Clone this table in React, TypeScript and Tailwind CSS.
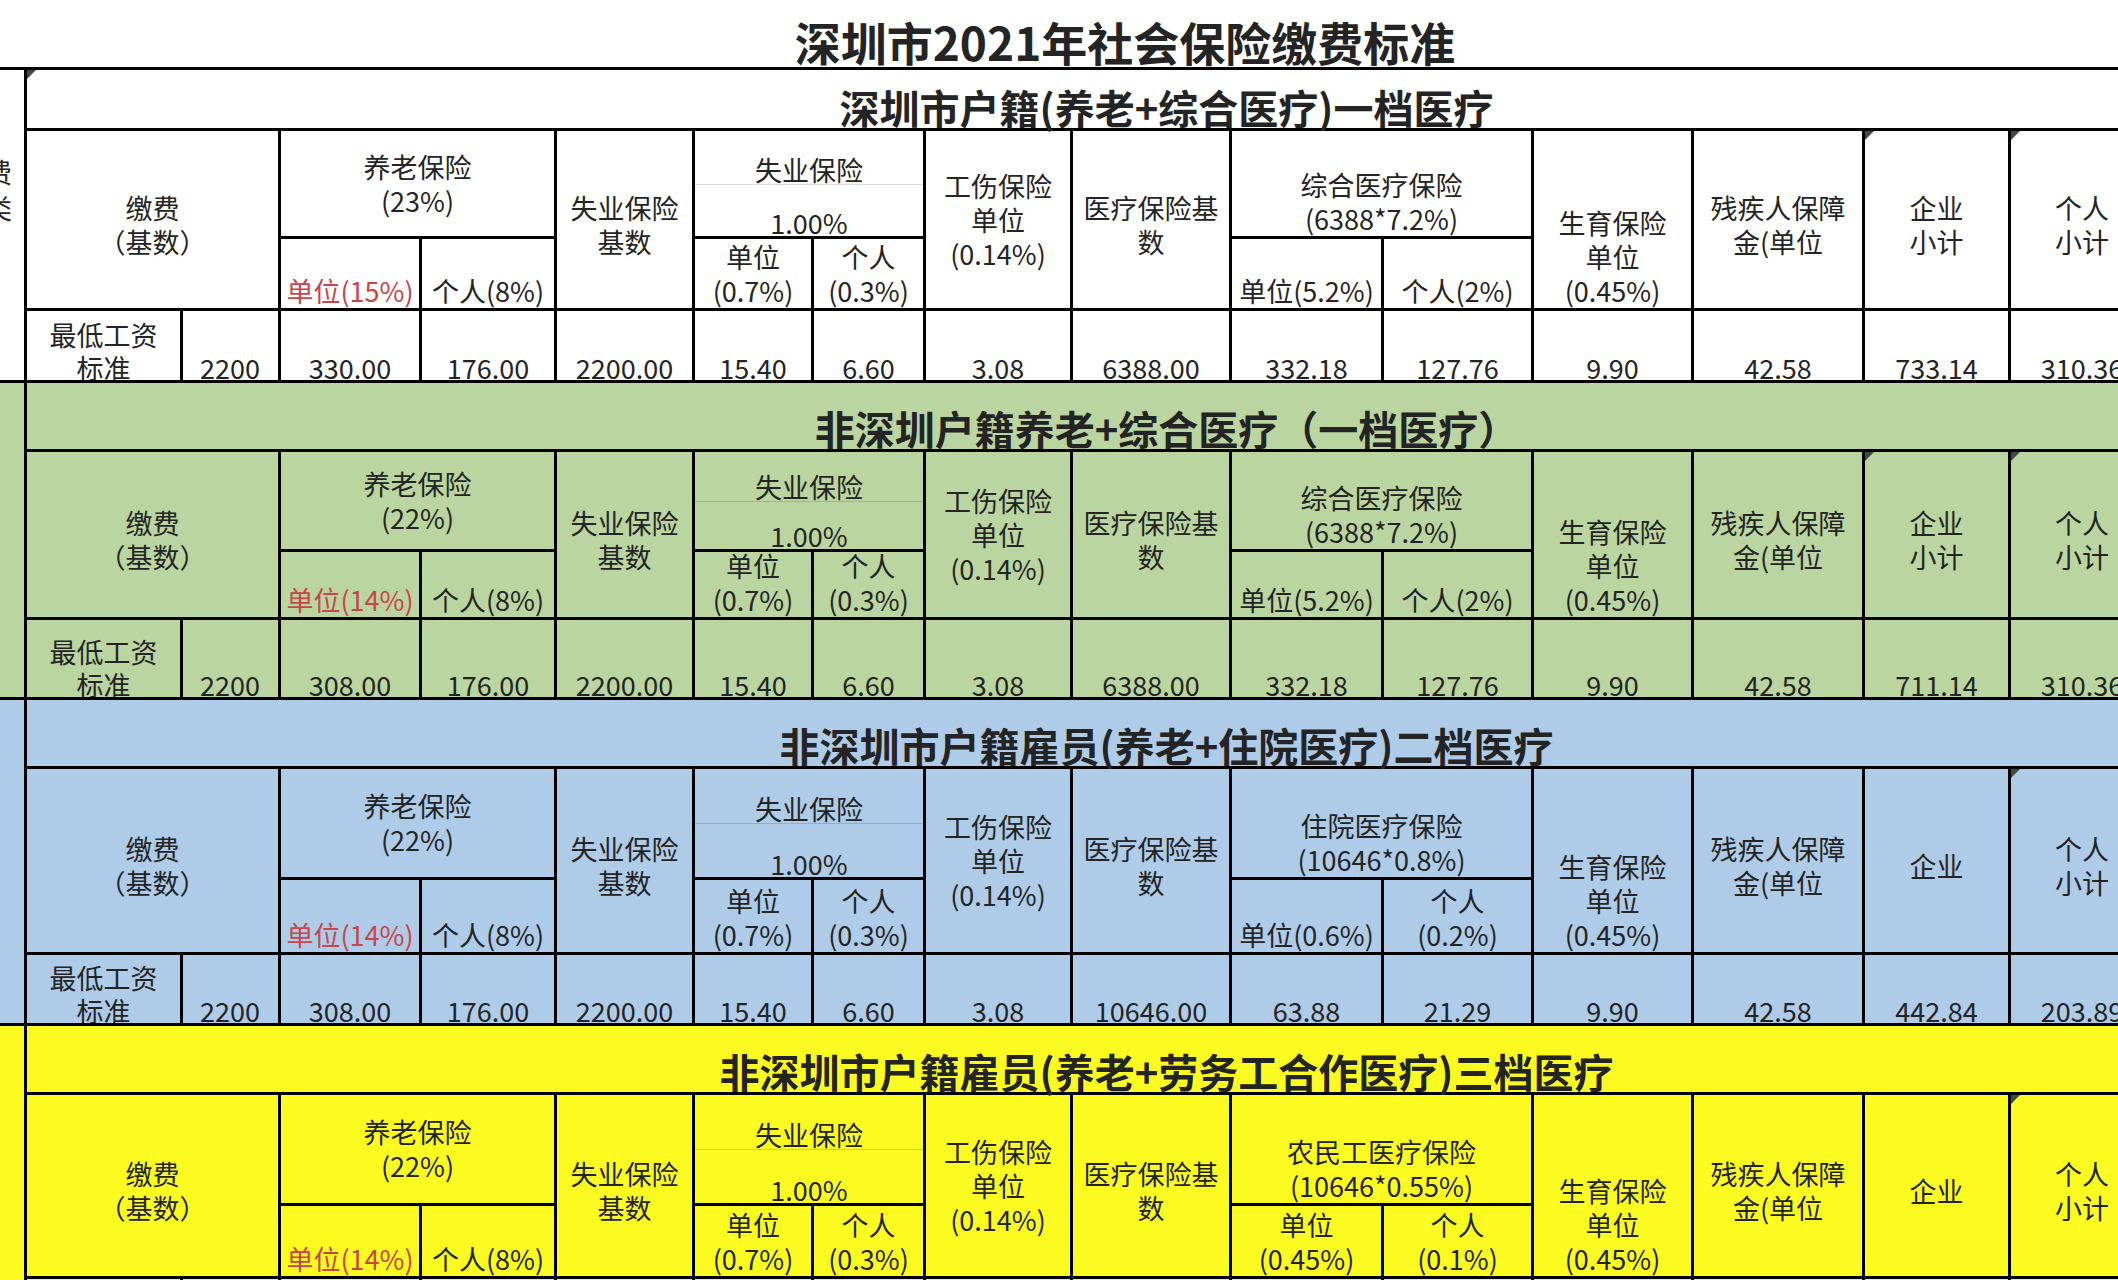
import React from 'react';

// 深圳市2021年社会保险缴费标准 —— 表格截图还原

const COLS =
  'grid-cols-[80px_153px_95px_138px_132px_135px_116px_109px_144px_156px_149px_147px_157px_168px_143px_142px_150px]';

const DATA_COLS = [
  'col-[4/5]',
  'col-[5/6]',
  'col-[6/7]',
  'col-[7/8]',
  'col-[8/9]',
  'col-[9/10]',
  'col-[10/11]',
  'col-[11/12]',
  'col-[12/13]',
  'col-[13/14]',
  'col-[14/15]',
  'col-[15/16]',
  'col-[16/17]',
];

interface SectionData {
  bg: string;
  rows: string;
  title: string;
  pension: string;
  unitPension: string;
  medName: string;
  medFormula: string;
  medUnit: string[];
  medPerson: string[];
  company: string[];
  values: string[];
  triTitle?: boolean;
  triCompany?: boolean;
  triPerson?: boolean;
  leftText?: boolean;
}

const sections: SectionData[] = [
  {
    bg: 'bg-white',
    rows: 'grid-rows-[58px_105px_69px_69px]',
    title: '深圳市户籍(养老+综合医疗)一档医疗',
    pension: '(23%)',
    unitPension: '单位(15%)',
    medName: '综合医疗保险',
    medFormula: '(6388*7.2%)',
    medUnit: ['单位(5.2%)'],
    medPerson: ['个人(2%)'],
    company: ['企业', '小计'],
    values: ['330.00', '176.00', '2200.00', '15.40', '6.60', '3.08', '6388.00', '332.18', '127.76', '9.90', '42.58', '733.14', '310.36'],
    triTitle: true,
    triCompany: true,
    triPerson: true,
    leftText: true,
  },
  {
    bg: 'bg-[#bad5a0]',
    rows: 'grid-rows-[66px_97px_65px_77px]',
    title: '非深圳户籍养老+综合医疗（一档医疗）',
    pension: '(22%)',
    unitPension: '单位(14%)',
    medName: '综合医疗保险',
    medFormula: '(6388*7.2%)',
    medUnit: ['单位(5.2%)'],
    medPerson: ['个人(2%)'],
    company: ['企业', '小计'],
    values: ['308.00', '176.00', '2200.00', '15.40', '6.60', '3.08', '6388.00', '332.18', '127.76', '9.90', '42.58', '711.14', '310.36'],
    triCompany: true,
    triPerson: true,
  },
  {
    bg: 'bg-[#aecbe8]',
    rows: 'grid-rows-[66px_108px_72px_68px]',
    title: '非深圳市户籍雇员(养老+住院医疗)二档医疗',
    pension: '(22%)',
    unitPension: '单位(14%)',
    medName: '住院医疗保险',
    medFormula: '(10646*0.8%)',
    medUnit: ['单位(0.6%)'],
    medPerson: ['个人', '(0.2%)'],
    company: ['企业'],
    values: ['308.00', '176.00', '2200.00', '15.40', '6.60', '3.08', '10646.00', '63.88', '21.29', '9.90', '42.58', '442.84', '203.89'],
    triPerson: true,
  },
  {
    bg: 'bg-[#fbfb22]',
    rows: 'grid-rows-[66px_108px_70px_70px]',
    title: '非深圳市户籍雇员(养老+劳务工合作医疗)三档医疗',
    pension: '(22%)',
    unitPension: '单位(14%)',
    medName: '农民工医疗保险',
    medFormula: '(10646*0.55%)',
    medUnit: ['单位', '(0.45%)'],
    medPerson: ['个人', '(0.1%)'],
    company: ['企业'],
    values: ['308.00', '176.00', '2200.00', '15.40', '6.60', '3.08', '10646.00', '47.91', '10.65', '9.90', '42.58', '426.87', '192.65'],
    triPerson: true,
  },
];

// Excel 批注小三角
function Tri() {
  return (
    <span className="absolute left-0 top-0 w-0 h-0 border-t-[9px] border-r-[9px] border-t-[#3f4a40] border-r-transparent" />
  );
}

function Lines({ lines }: { lines: string[] }) {
  return (
    <div>
      {lines.map((l, i) => (
        <React.Fragment key={i}>
          {i > 0 && <br />}
          {l}
        </React.Fragment>
      ))}
    </div>
  );
}

// 居中块（略偏下）
function Mid({ pos, bg, lines, tri }: { pos: string; bg: string; lines: string[]; tri?: boolean }) {
  return (
    <div className={`${pos} ${bg} relative flex items-center justify-center pt-[10px] overflow-hidden`}>
      {tri && <Tri />}
      <Lines lines={lines} />
    </div>
  );
}

// 底部对齐块
function Bot({ pos, bg, lines, red }: { pos: string; bg: string; lines: string[]; red?: boolean }) {
  return (
    <div className={`${pos} ${bg} relative flex items-end justify-center overflow-hidden`}>
      <div className={red ? 'text-[#c8464a]' : ''}>
        <Lines lines={lines} />
      </div>
    </div>
  );
}

function Section({ s }: { s: SectionData }) {
  const bg = s.bg;
  return (
    <div className={`grid ${COLS} ${s.rows} gap-[3px] bg-black pb-[3px] text-[27px] leading-[34px] whitespace-nowrap text-center`}>
      {/* 左侧被截断的类别列 */}
      <div className={`col-[1/2] row-[1/5] ${bg} flex flex-col items-end pt-[84px] pr-[12px] leading-[36px] overflow-hidden`}>
        {s.leftText && <Lines lines={['缴费', '种类']} />}
      </div>

      {/* 分区标题 */}
      <div className={`col-[2/18] row-[1/2] ${bg} relative flex items-end justify-center pb-[1px]`}>
        {s.triTitle && <Tri />}
        <span className="text-[40px] leading-none font-bold">{s.title}</span>
      </div>

      <Mid pos="col-[2/4] row-[2/4]" bg={bg} lines={['缴费', '（基数）']} />

      {/* 养老保险 */}
      <div className={`col-[4/6] row-[2/3] ${bg} flex items-center justify-center`}>
        <Lines lines={['养老保险', s.pension]} />
      </div>
      <Bot pos="col-[4/5] row-[3/4]" bg={bg} lines={[s.unitPension]} red />
      <Bot pos="col-[5/6] row-[3/4]" bg={bg} lines={['个人(8%)']} />

      <Mid pos="col-[6/7] row-[2/4]" bg={bg} lines={['失业保险', '基数']} />

      {/* 失业保险 */}
      <div className={`col-[7/9] row-[2/3] ${bg} flex flex-col leading-none`}>
        <div className="flex-1 flex items-end justify-center border-b border-black/15 pb-[1px]">失业保险</div>
        <div className="flex-1 flex items-end justify-center">1.00%</div>
      </div>
      <Bot pos="col-[7/8] row-[3/4]" bg={bg} lines={['单位', '(0.7%)']} />
      <Bot pos="col-[8/9] row-[3/4]" bg={bg} lines={['个人', '(0.3%)']} />

      <div className={`col-[9/10] row-[2/4] ${bg} flex items-center justify-center`}>
        <Lines lines={['工伤保险', '单位', '(0.14%)']} />
      </div>

      <Mid pos="col-[10/11] row-[2/4]" bg={bg} lines={['医疗保险基', '数']} />

      {/* 医疗保险 */}
      <Bot pos="col-[11/13] row-[2/3]" bg={bg} lines={[s.medName, s.medFormula]} />
      <Bot pos="col-[11/12] row-[3/4]" bg={bg} lines={s.medUnit} />
      <Bot pos="col-[12/13] row-[3/4]" bg={bg} lines={s.medPerson} />

      <Bot pos="col-[13/14] row-[2/4]" bg={bg} lines={['生育保险', '单位', '(0.45%)']} />
      <Mid pos="col-[14/15] row-[2/4]" bg={bg} lines={['残疾人保障', '金(单位']} />
      <Mid pos="col-[15/16] row-[2/4]" bg={bg} lines={s.company} tri={s.triCompany} />
      <Mid pos="col-[16/17] row-[2/4]" bg={bg} lines={['个人', '小计']} tri={s.triPerson} />
      <Mid pos="col-[17/18] row-[2/4]" bg={bg} lines={['合计']} />

      {/* 数据行 */}
      <div className={`col-[2/3] row-[4/5] ${bg} flex items-end justify-center overflow-hidden leading-[33px]`}>
        <div className="translate-y-[4px]">
          <Lines lines={['最低工资', '标准']} />
        </div>
      </div>
      <div className={`col-[3/4] row-[4/5] ${bg} flex items-end justify-end pr-[18px] leading-none overflow-hidden`}>
        <span className="translate-y-[1px]">2200</span>
      </div>
      {s.values.map((v, i) => (
        <div key={i} className={`${DATA_COLS[i]} row-[4/5] ${bg} flex items-end justify-center leading-none overflow-hidden`}>
          <span className="translate-y-[1px]">{v}</span>
        </div>
      ))}
      <div className={`col-[17/18] row-[4/5] ${bg}`} />
    </div>
  );
}

export default function App() {
  return (
    <div className="w-[2118px] h-[1280px] overflow-hidden bg-white text-[#242424] font-['Noto_Sans_CJK_SC',sans-serif]">
      <div className="w-[2362px] ml-[-56px]">
        <div className="h-[70px] border-b-[3px] border-black flex items-end justify-center pb-[3px]">
          <span className="text-[46px] leading-none font-bold">深圳市2021年社会保险缴费标准</span>
        </div>
        {sections.map((s, i) => (
          <Section key={i} s={s} />
        ))}
      </div>
    </div>
  );
}
